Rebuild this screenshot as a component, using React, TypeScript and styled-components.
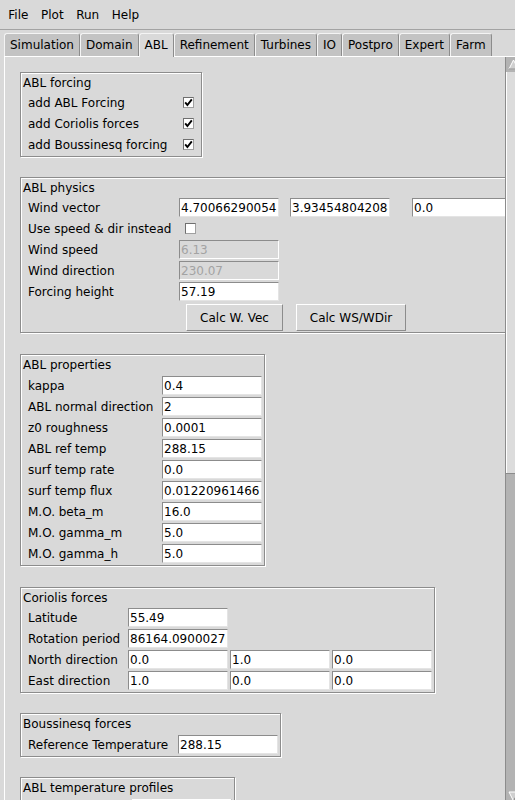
import React from 'react';
import styled, { createGlobalStyle } from 'styled-components';

const Global = createGlobalStyle`
  html, body { margin: 0; padding: 0; background: #d9d9d9; }
  body { font-family: "DejaVu Sans", "Noto Sans", sans-serif; font-size: 12px; color: #000; }
  * { box-sizing: border-box; }
`;

const Window = styled.div`
  width: 515px;
  height: 800px;
  overflow: hidden;
  background: #d9d9d9;
  display: flex;
  flex-direction: column;
  font-family: "DejaVu Sans", "Noto Sans", sans-serif;
  font-size: 12px;
`;

const MenuBar = styled.div`
  height: 30px;
  flex-shrink: 0;
  display: flex;
  align-items: center;
  padding-left: 2px;
  border-bottom: 1px solid #a3a3a3;
`;

const MenuItem = styled.span`
  padding: 0 6.3px;
  line-height: 20px;
`;

const Notebook = styled.div`
  margin: 3px 0 0 4px;
  width: 516px;
  display: flex;
  flex-direction: column;
  flex-shrink: 0;
`;

const TabRow = styled.div`
  display: flex;
  height: 23px;
  position: relative;
  z-index: 1;
`;

const Tab = styled.div<{ $active?: boolean }>`
  padding: 0 5px;
  height: ${p => (p.$active ? '24px' : '23px')};
  line-height: 22px;
  background: ${p => (p.$active ? '#d9d9d9' : '#c3c3c3')};
  border-top: 1px solid #f4f4f4;
  border-left: 1px solid #f4f4f4;
  border-right: 1px solid #8c8c8c;
  border-radius: 3px 3px 0 0;
  white-space: nowrap;
`;

const Panel = styled.div`
  height: 748px;
  display: flex;
  border-top: 1px solid #fff;
  border-left: 1px solid #fff;
`;

const Content = styled.div`
  width: 500px;
  flex-shrink: 0;
  overflow: hidden;
  padding: 15px 0 0 15px;
  display: flex;
  flex-direction: column;
  align-items: flex-start;
`;

const Scrollbar = styled.div`
  width: 15px;
  flex-shrink: 0;
  display: flex;
  flex-direction: column;
  border-left: 1px solid #8c8c8c;
`;

const Arrow = styled.div`
  height: 15px;
  flex-shrink: 0;
  background: #b3b3b3;
  display: flex;
  align-items: center;
  justify-content: center;
`;

const Trough = styled.div`
  flex: 1;
  background: #dcdcdc;
  box-shadow: inset 1px 0 0 #fff;
`;

const Thumb = styled.div`
  height: 316px;
  flex-shrink: 0;
  background: #b3b3b3;
  border-top: 1px solid #8c8c8c;
`;

const Group = styled.section<{ $mt?: number }>`
  margin-top: ${p => p.$mt ?? 21}px;
  width: max-content;
  flex-shrink: 0;
  border: 1px solid #8c8c8c;
  box-shadow: inset 1px 1px 0 #fff, 1px 1px 0 #fff;
  padding: 0 2px 1px 0;
`;

const GroupTitle = styled.div<{ $h?: number }>`
  height: ${p => p.$h ?? 20}px;
  line-height: 20px;
  padding-left: 2px;
  white-space: nowrap;
`;

const FieldGrid = styled.div<{ $cols: string }>`
  display: grid;
  grid-template-columns: ${p => p.$cols};
  grid-auto-rows: 21px;
  align-items: center;
`;

const ButtonRow = styled.div<{ $cols: string }>`
  display: grid;
  grid-template-columns: ${p => p.$cols};
  padding-top: 2px;
  height: 29px;
`;

const FieldLabel = styled.span`
  padding-left: 7px;
  white-space: nowrap;
`;

const Entry = styled.input`
  width: 100px;
  height: 19px;
  margin: 0;
  padding: 0 1px;
  font: inherit;
  font-family: "DejaVu Sans", "Noto Sans", sans-serif;
  font-size: 12px;
  color: #000;
  background: #fff;
  border: 1px solid;
  border-color: #8c8c8c #e4e4e4 #e4e4e4 #8c8c8c;
  border-radius: 0;
  outline: none;
  &:disabled {
    background: #d9d9d9;
    color: #a3a3a3;
    -webkit-text-fill-color: #a3a3a3;
    border-color: #8c8c8c #fff #fff #8c8c8c;
  }
`;

const MenuBox = styled.div`
  width: 100px;
  height: 27px;
  background: #d9d9d9;
  border: 1px solid;
  border-color: #fff #8c8c8c #8c8c8c #fff;
  align-self: start;
  margin-top: 1px;
`;

const CheckBox = styled.span`
  margin-left: 6px;
  width: 11px;
  height: 11px;
  background: #fff;
  border: 1px solid;
  border-color: #6f6f6f #a0a0a0 #a0a0a0 #6f6f6f;
  display: inline-flex;
  align-items: center;
  justify-content: center;
`;

const Button = styled.button`
  justify-self: center;
  height: 27px;
  padding: 0 13px;
  font: inherit;
  font-family: "DejaVu Sans", "Noto Sans", sans-serif;
  font-size: 12px;
  color: #000;
  background: #d9d9d9;
  border: 1px solid;
  border-color: #fff #8c8c8c #8c8c8c #fff;
  border-radius: 0;
  white-space: nowrap;
`;

const Check: React.FC<{ checked?: boolean }> = ({ checked }) => (
  <CheckBox>
    {checked && (
      <svg width="9" height="9" viewBox="0 0 9 9">
        <path d="M1.2 4.3 L3.4 7 L7.8 1.3" fill="none" stroke="#000" strokeWidth="1.9" />
      </svg>
    )}
  </CheckBox>
);

const tabs = ['Simulation', 'Domain', 'ABL', 'Refinement', 'Turbines', 'IO', 'Postpro', 'Expert', 'Farm'];

const properties: [string, string][] = [
  ['kappa', '0.4'],
  ['ABL normal direction', '2'],
  ['z0 roughness', '0.0001'],
  ['ABL ref temp', '288.15'],
  ['surf temp rate', '0.0'],
  ['surf temp flux', '0.012209614667'],
  ['M.O. beta_m', '16.0'],
  ['M.O. gamma_m', '5.0'],
  ['M.O. gamma_h', '5.0'],
];

const physCols = '158px 111px 122px 100px';
const corCols = '107px 102px 102px 100px';

export default function App() {
  return (
    <Window>
      <Global />
      <MenuBar>
        <MenuItem>File</MenuItem>
        <MenuItem>Plot</MenuItem>
        <MenuItem>Run</MenuItem>
        <MenuItem>Help</MenuItem>
      </MenuBar>
      <Notebook>
        <TabRow>
          {tabs.map(t => (
            <Tab key={t} $active={t === 'ABL'}>{t}</Tab>
          ))}
        </TabRow>
        <Panel>
          <Content>
            <Group $mt={0}>
              <GroupTitle $h={19}>ABL forcing</GroupTitle>
              <FieldGrid $cols="156px 22px">
                <FieldLabel>add ABL Forcing</FieldLabel>
                <Check checked />
                <FieldLabel>add Coriolis forces</FieldLabel>
                <Check checked />
                <FieldLabel>add Boussinesq forcing</FieldLabel>
                <Check checked />
              </FieldGrid>
            </Group>

            <Group $mt={20}>
              <GroupTitle $h={19}>ABL physics</GroupTitle>
              <FieldGrid $cols={physCols}>
                <FieldLabel>Wind vector</FieldLabel>
                <Entry defaultValue="4.700662900543" />
                <Entry defaultValue="3.934548042084" />
                <Entry defaultValue="0.0" />
                <FieldLabel>Use speed &amp; dir instead</FieldLabel>
                <Check />
                <span />
                <span />
                <FieldLabel>Wind speed</FieldLabel>
                <Entry disabled defaultValue="6.13" />
                <span />
                <span />
                <FieldLabel>Wind direction</FieldLabel>
                <Entry disabled defaultValue="230.07" />
                <span />
                <span />
                <FieldLabel>Forcing height</FieldLabel>
                <Entry defaultValue="57.19" />
                <span />
                <span />
              </FieldGrid>
              <ButtonRow $cols={physCols}>
                <span />
                <Button>Calc W. Vec</Button>
                <Button>Calc WS/WDir</Button>
              </ButtonRow>
            </Group>

            <Group>
              <GroupTitle>ABL properties</GroupTitle>
              <FieldGrid $cols="141px 100px">
                {properties.map(([label, value]) => (
                  <React.Fragment key={label}>
                    <FieldLabel>{label}</FieldLabel>
                    <Entry defaultValue={value} />
                  </React.Fragment>
                ))}
              </FieldGrid>
            </Group>

            <Group>
              <GroupTitle $h={19}>Coriolis forces</GroupTitle>
              <FieldGrid $cols={corCols}>
                <FieldLabel>Latitude</FieldLabel>
                <Entry defaultValue="55.49" />
                <span />
                <span />
                <FieldLabel>Rotation period</FieldLabel>
                <Entry defaultValue="86164.09000270" />
                <span />
                <span />
                <FieldLabel>North direction</FieldLabel>
                <Entry defaultValue="0.0" />
                <Entry defaultValue="1.0" />
                <Entry defaultValue="0.0" />
                <FieldLabel>East direction</FieldLabel>
                <Entry defaultValue="1.0" />
                <Entry defaultValue="0.0" />
                <Entry defaultValue="0.0" />
              </FieldGrid>
            </Group>

            <Group $mt={20}>
              <GroupTitle>Boussinesq forces</GroupTitle>
              <FieldGrid $cols="157px 100px">
                <FieldLabel>Reference Temperature</FieldLabel>
                <Entry defaultValue="288.15" />
              </FieldGrid>
            </Group>

            <Group $mt={20}>
              <GroupTitle>ABL temperature profiles</GroupTitle>
              <FieldGrid $cols="111px 100px">
                <span />
                <MenuBox />
              </FieldGrid>
            </Group>
          </Content>
          <Scrollbar>
            <Arrow>
              <svg width="11" height="11" viewBox="0 0 11 11">
                <polygon points="5.5,1 10,10 1,10" fill="#cfcfcf" stroke="#fff" strokeWidth="1" />
                <line x1="1" y1="10" x2="10" y2="10" stroke="#7a7a7a" strokeWidth="1" />
              </svg>
            </Arrow>
            <Trough />
            <Thumb />
            <Arrow>
              <svg width="11" height="11" viewBox="0 0 11 11">
                <polygon points="1,1 10,1 5.5,10" fill="#cfcfcf" stroke="#fff" strokeWidth="1" />
                <line x1="10" y1="1" x2="5.5" y2="10" stroke="#7a7a7a" strokeWidth="1" />
              </svg>
            </Arrow>
          </Scrollbar>
        </Panel>
      </Notebook>
    </Window>
  );
}
